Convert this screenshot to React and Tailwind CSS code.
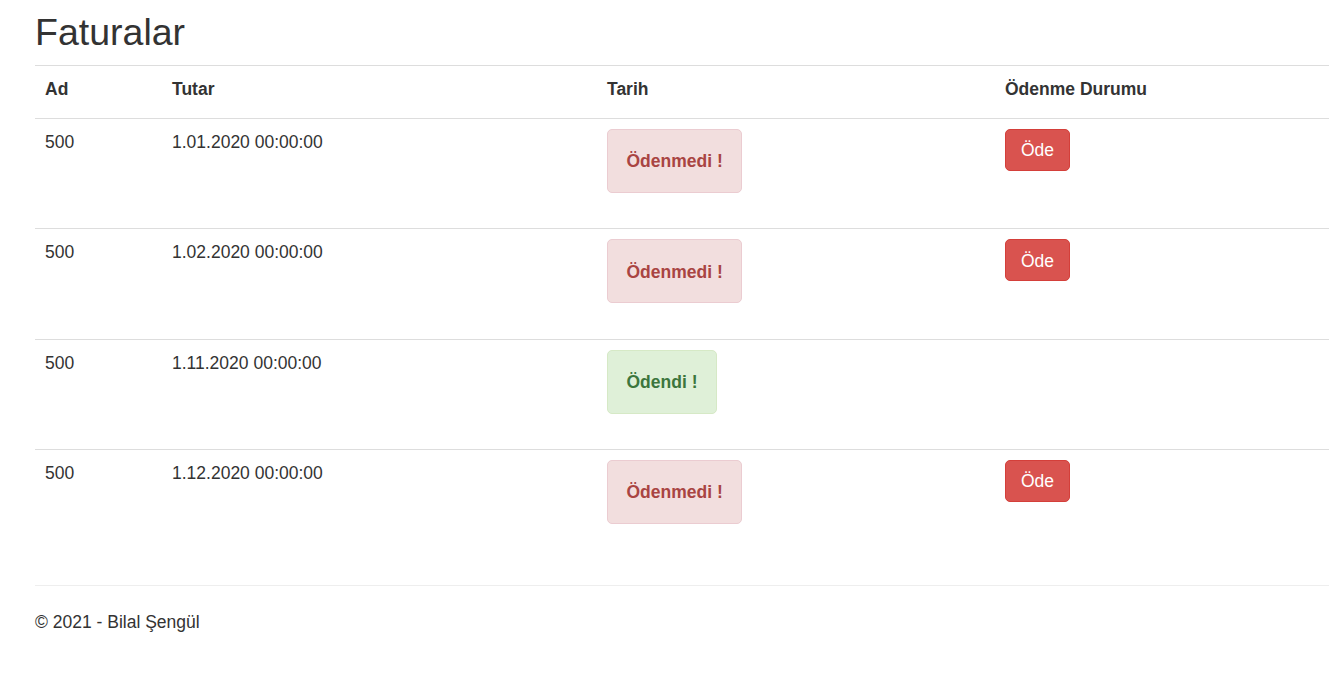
const invoices = [
    { ad: '500', tarih: '1.01.2020 00:00:00', paid: false },
    { ad: '500', tarih: '1.02.2020 00:00:00', paid: false },
    { ad: '500', tarih: '1.11.2020 00:00:00', paid: true },
    { ad: '500', tarih: '1.12.2020 00:00:00', paid: false },
]

const StatusAlert = ({ paid }) => {
    if (paid) {
        return (
            <div className="inline-block rounded-[5px] border border-[#d6e9c6] bg-[#dff0d8] px-[18.5px] pt-[19.5px] pb-[17.8px] font-bold text-[#3c763d] mb-[25.1px]">
                Ödendi !
            </div>
        )
    }
    return (
        <div className="inline-block rounded-[5px] border border-[#ebccd1] bg-[#f2dede] px-[18.5px] pt-[19.5px] pb-[17.8px] font-bold text-[#a94442] mb-[25.1px]">
            Ödenmedi !
        </div>
    )
}

const App = () => {
    return (
        <div className="min-h-screen bg-white pl-[35px] text-[17.5px] leading-[25px] text-[#333] font-['Liberation_Sans',Arial,sans-serif]">
            <h2 className="mt-[12px] mb-[11.5px] text-[37.5px] leading-[41.25px] font-normal">Faturalar</h2>

            <table className="w-full table-fixed border-collapse mb-[26px]">
                <thead>
                    <tr className="border-t border-[#ddd]">
                        <th className="w-[127px] px-[10px] pt-[11px] pb-[16px] text-left font-bold">Ad</th>
                        <th className="w-[435px] px-[10px] pt-[11px] pb-[16px] text-left font-bold">Tutar</th>
                        <th className="w-[398px] px-[10px] pt-[11px] pb-[16px] text-left font-bold">Tarih</th>
                        <th className="px-[10px] pt-[11px] pb-[16px] text-left font-bold">Ödenme Durumu</th>
                    </tr>
                </thead>
                <tbody>
                    {invoices.map((inv, i) => (
                        <tr key={i} className="border-t border-[#ddd] align-top">
                            <td className="px-[10px] pt-[11px] pb-[9px]">{inv.ad}</td>
                            <td className="px-[10px] pt-[11px] pb-[9px]">{inv.tarih}</td>
                            <td className="p-[10px]">
                                <StatusAlert paid={inv.paid} />
                            </td>
                            <td className="p-[10px]">
                                {!inv.paid && (
                                    <button type="button" className="rounded-[5px] border border-[#d43f3a] bg-[#d9534f] px-[15px] pt-[8.5px] pb-[6.5px] leading-[25px] text-white">
                                        Öde
                                    </button>
                                )}
                            </td>
                        </tr>
                    ))}
                </tbody>
            </table>

            <hr className="border-0 border-t border-[#eee]" />
            <footer className="pt-[24px]">
                <p>© 2021 - Bilal Şengül</p>
            </footer>
        </div>
    )
}

export default App
